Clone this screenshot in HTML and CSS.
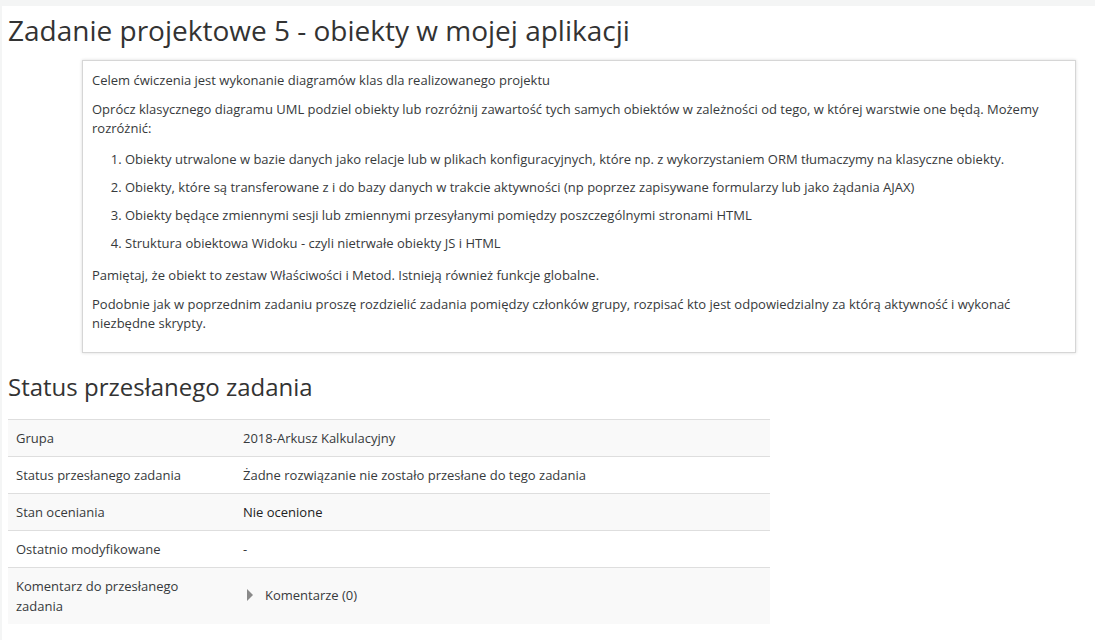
FILE: index.html
```html
<!DOCTYPE html>
<html lang="pl">
<head>
<meta charset="utf-8">
<title>Zadanie projektowe 5</title>
<link rel="stylesheet" href="styles.css">
</head>
<body>
<div class="page">
  <h2 class="title">Zadanie projektowe 5 - obiekty w mojej aplikacji</h2>
  <div class="intro">
    <p>Celem ćwiczenia jest wykonanie diagramów klas dla realizowanego projektu</p>
    <p>Oprócz klasycznego diagramu UML podziel obiekty lub rozróżnij zawartość tych samych obiektów w zależności od tego, w której warstwie one będą. Możemy rozróżnić:</p>
    <ol>
      <li>Obiekty utrwalone w bazie danych jako relacje lub w plikach konfiguracyjnych, które np. z wykorzystaniem ORM tłumaczymy na klasyczne obiekty.</li>
      <li>Obiekty, które są transferowane z i do bazy danych w trakcie aktywności (np poprzez zapisywane formularzy lub jako żądania AJAX)</li>
      <li>Obiekty będące zmiennymi sesji lub zmiennymi przesyłanymi pomiędzy poszczególnymi stronami HTML</li>
      <li>Struktura obiektowa Widoku - czyli nietrwałe obiekty JS i HTML</li>
    </ol>
    <p>Pamiętaj, że obiekt to zestaw Właściwości i Metod. Istnieją również funkcje globalne.</p>
    <p>Podobnie jak w poprzednim zadaniu proszę rozdzielić zadania pomiędzy członków grupy, rozpisać kto jest odpowiedzialny za którą aktywność i wykonać niezbędne skrypty.</p>
  </div>
  <h3 class="subtitle">Status przesłanego zadania</h3>
  <table class="status">
    <colgroup><col class="c1"><col class="c2"></colgroup>
    <tbody>
      <tr class="odd"><td>Grupa</td><td>2018-Arkusz Kalkulacyjny</td></tr>
      <tr><td>Status przesłanego zadania</td><td>Żadne rozwiązanie nie zostało przesłane do tego zadania</td></tr>
      <tr class="odd"><td>Stan oceniania</td><td class="strongish">Nie ocenione</td></tr>
      <tr><td>Ostatnio modyfikowane</td><td>-</td></tr>
      <tr class="odd"><td>Komentarz do przesłanego zadania</td><td><span class="toggle"><svg class="caret" width="8" height="12" viewBox="0 0 8 12"><path d="M1 0 L7 6 L1 12 Z" fill="#8a8a8a"/></svg>Komentarze (0)</span></td></tr>
    </tbody>
  </table>
</div>
</body>
</html>
```

FILE: styles.css
```css
html, body {
  margin: 0;
  padding: 0;
}
body {
  background: #f4f5f5;
  font-family: "Open Sans", "Liberation Sans", sans-serif;
  font-size: 13px;
  line-height: 19.5px;
  color: #373a3c;
  padding: 6px 0 0 2px;
}
.page {
  background: #fff;
  padding: 0 6px 20px 6px;
  min-height: 640px;
}
.title {
  margin: 0;
  padding-top: 6px;
  font-size: 28px;
  font-weight: 400;
  line-height: 36px;
  color: #333;
}
.intro {
  margin: 12px 13px 0 74px;
  border: 1px solid #d6d6d6;
  box-shadow: 0 0 3px rgba(0,0,0,0.15);
  padding: 10px 9px 18px 9px;
}
.intro p {
  margin: 0 0 9px 0;
}
.intro ol {
  margin: 0 0 13px 0;
  padding: 2px 0 0 33px;
}
.intro li {
  margin-bottom: 8.5px;
}
.intro p:last-child {
  margin-bottom: 0;
}
.subtitle {
  margin: 18px 0 0 0;
  font-size: 24px;
  font-weight: 400;
  line-height: 32px;
  color: #333;
}
.status {
  margin-top: 16px;
  width: 762px;
  border-collapse: collapse;
  table-layout: fixed;
}
.status col.c1 {
  width: 227px;
}
.status td {
  border-top: 1px solid #dedede;
  padding: 8px 8px;
  vertical-align: middle;
  line-height: 20px;
}
.status tr.odd td {
  background: #f9f9f9;
}
.strongish {
  color: #222;
}
.toggle {
  display: inline-flex;
  align-items: center;
  gap: 11px;
  padding-left: 3px;
}
.caret {
  display: block;
}
```
